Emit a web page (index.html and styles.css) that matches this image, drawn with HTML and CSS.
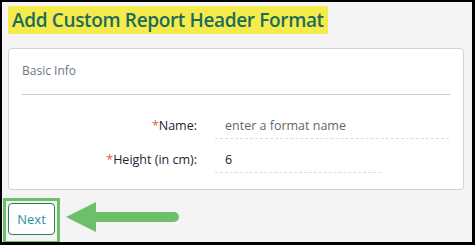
FILE: index.html
```html
<!DOCTYPE html>
<html>
<head>
<meta charset="utf-8">
<link rel="stylesheet" href="styles.css">
</head>
<body>
<div class="frame">
  <h1 class="title">Add Custom Report Header Format</h1>
  <section class="card">
    <div class="card-head">Basic Info</div>
    <div class="form">
      <div class="row">
        <label class="label"><span class="req">*</span>Name:</label>
        <div class="input wide"><span class="placeholder">enter a format name</span></div>
      </div>
      <div class="row">
        <label class="label"><span class="req">*</span>Height (in cm):</label>
        <div class="input narrow"><span class="value">6</span></div>
      </div>
    </div>
  </section>
  <div class="footer">
    <div class="highlight"><button class="btn">Next</button></div>
    <svg class="arrow" width="114" height="32" viewBox="0 0 114 32">
      <path d="M0 15 L30 0 L30 10 L108 10 A5 5 0 0 1 108 20 L30 20 L30 30 Z" fill="#6cc06a"/>
    </svg>
  </div>
</div>
</body>
</html>
```
FILE: styles.css
```css
* { box-sizing: border-box; }
html, body { margin: 0; padding: 0; }
body { background: #f4f4f4; font-family: "Open Sans", "Noto Sans", sans-serif; }
.frame {
  width: 475px; height: 245px;
  border-style: solid; border-color: #000;
  border-width: 2px 3px 3px 2px;
  background: #f4f4f4;
  padding: 4px 0 0 6px;
  overflow: hidden;
}
.title {
  display: inline-block;
  margin: 0;
  background: #f5eb4b;
  color: #1b6b5e;
  font-size: 19px;
  font-weight: 600;
  height: 28px;
  line-height: 28px;
  padding: 0 4px;
  letter-spacing: -0.35px;
}
.card {
  margin-top: 14px;
  width: 456px;
  height: 142px;
  background: #fff;
  border: 1px solid #d2d2d2;
  border-radius: 4px;
  padding: 0 13px;
}
.card-head {
  color: #6b7886;
  font-size: 12px;
  height: 46px;
  line-height: 43px;
  border-bottom: 1px solid #c8c8c8;
}
.form { padding-top: 19px; }
.row { display: flex; align-items: stretch; height: 34px; }
.label {
  width: 175px;
  text-align: right;
  color: #1e2433;
  font-size: 12.5px;
  line-height: 24px;
}
.req { color: #e06060; }
.input {
  margin-left: 18px;
  height: 25px;
  line-height: 24px;
  border-bottom: 1px dashed #dcdcdc;
  padding-left: 10px;
  font-size: 12.5px;
}
.wide { width: 234px; }
.narrow { width: 166px; }
.placeholder { color: #666; }
.value { color: #222; }
.footer { display: flex; align-items: center; margin-top: 8px; margin-left: -5px; }
.highlight {
  border: 3px solid #6cc06a;
  padding: 2px;
  height: 46px;
}
.btn {
  display: block;
  width: 47px; height: 32px;
  border: 1px solid #2e7d5a;
  border-radius: 4px;
  background: #fff;
  color: #2a8fa0;
  font-family: "Open Sans", sans-serif;
  font-size: 13px;
  padding: 0;
}
.arrow { margin-left: 6px; margin-top: -6px; }
```
